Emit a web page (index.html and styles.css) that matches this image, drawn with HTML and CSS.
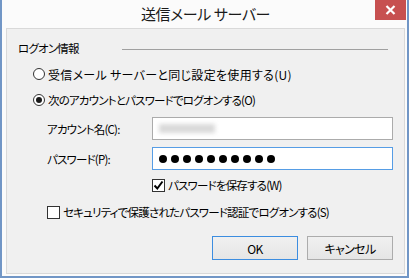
FILE: index.html
```html
<!DOCTYPE html>
<html lang="ja">
<head>
    <meta charset="UTF-8">
    <title>送信メール サーバー</title>
    <link rel="stylesheet" href="styles.css">
</head>
<body>
    <div class="window">
        <div class="titlebar">
            <span></span>
            <h1 class="title">送信メール サーバー</h1>
            <button class="close" aria-label="閉じる">
                <svg width="11" height="10" viewBox="0 0 11 10">
                    <path d="M1.5 1 L9.5 9 M9.5 1 L1.5 9" stroke="#fff" stroke-width="2.2" fill="none"/>
                </svg>
            </button>
        </div>
        <div class="content">
            <div class="group-head">
                <span>ログオン情報</span>
                <span class="rule"></span>
            </div>

            <div class="row radio-row">
                <span class="radio"></span>
                <span class="wide">受信メール サーバーと同じ設定を使用する(U)</span>
            </div>
            <div class="row radio-row">
                <span class="radio checked"></span>
                <span>次のアカウントとパスワードでログオンする(O)</span>
            </div>

            <div class="field">
                <label>アカウント名(C):</label>
                <div class="input"><span class="blurred"></span></div>
            </div>
            <div class="field">
                <label>パスワード(P):</label>
                <div class="input focused">
                    <span class="dot"></span><span class="dot"></span><span class="dot"></span><span class="dot"></span><span class="dot"></span>
                    <span class="dot"></span><span class="dot"></span><span class="dot"></span><span class="dot"></span><span class="dot"></span>
                </div>
            </div>

            <div class="row check-row save">
                <span class="check checked">
                    <svg width="11" height="11" viewBox="0 0 11 11">
                        <path d="M1.5 5.5 L4.3 8.5 L9.5 1.5" stroke="#000" stroke-width="2" fill="none"/>
                    </svg>
                </span>
                <span>パスワードを保存する(W)</span>
            </div>
            <div class="row check-row spa">
                <span class="check"></span>
                <span>セキュリティで保護されたパスワード認証でログオンする(S)</span>
            </div>

            <div class="buttons">
                <button class="btn default">OK</button>
                <button class="btn">キャンセル</button>
            </div>
        </div>
    </div>
</body>
</html>
```

FILE: styles.css
```css
* {
    box-sizing: border-box;
}

body {
    margin: 0;
    font-family: "Noto Sans CJK JP", "Noto Sans", sans-serif;
    font-size: 11.5px;
    font-feature-settings: "palt";
    letter-spacing: -0.8px;
    color: #000;
}

.window {
    width: 409px;
    height: 278px;
    background: #fbfbfb;
    border: 2px solid #7196c6;
    border-top: 0;
    padding: 0 2px 2px 4px;
    display: flex;
    flex-direction: column;
}

.titlebar {
    height: 28px;
    display: grid;
    grid-template-columns: 1fr auto 1fr;
    align-items: center;
}

.title {
    margin: 0;
    font-size: 15px;
    font-weight: normal;
    color: #1a1a1a;
    letter-spacing: -0.4px;
    padding-bottom: 1px;
}

.close {
    justify-self: end;
    align-self: start;
    width: 31px;
    height: 20px;
    margin-right: -1px;
    border: 0;
    padding: 0;
    background: #c75050;
    display: flex;
    align-items: center;
    justify-content: center;
}

.content {
    flex: 1;
    background: #f0f0f0;
    border: 1px solid #d9d9d9;
    padding: 9px 0 0 0;
}

.group-head {
    height: 20px;
    display: flex;
    align-items: center;
    padding: 0 16px 0 11px;
}

.rule {
    width: 266px;
    margin-left: auto;
    margin-top: 3px;
    border-top: 1px solid #a0a0a0;
}

.row {
    height: 20px;
    display: flex;
    align-items: center;
}

.radio-row {
    margin-top: 6px;
    padding-left: 26px;
}

.wide {
    font-size: 12px;
    letter-spacing: 0.3px;
}

.radio {
    width: 12px;
    height: 12px;
    border: 1px solid #333;
    border-radius: 50%;
    background: #fff;
    margin-right: 3px;
    display: flex;
    align-items: center;
    justify-content: center;
}

.radio.checked::after {
    content: "";
    width: 6px;
    height: 6px;
    border-radius: 50%;
    background: #1a1a1a;
}

.field {
    height: 23px;
    margin-top: 7px;
    display: flex;
    align-items: center;
    padding-left: 40px;
}

.field label {
    width: 105px;
}

.input {
    width: 241px;
    height: 23px;
    background: #fff;
    border: 1px solid #ababab;
    display: flex;
    align-items: center;
    gap: 4px;
    padding-left: 6px;
}

.input.focused {
    border-color: #569de5;
}

.blurred {
    width: 56px;
    height: 9px;
    background: #d9d9d9;
    filter: blur(2px);
}

.dot {
    width: 8px;
    height: 8px;
    border-radius: 50%;
    background: #000;
}

.check-row {
    margin-top: 7px;
}

.check-row.save {
    margin-top: 5px;
    padding-left: 145px;
}

.check-row.spa {
    padding-left: 40px;
}

.check {
    width: 13px;
    height: 13px;
    border: 1px solid #333;
    background: #fff;
    margin-right: 3px;
    display: flex;
    align-items: center;
    justify-content: center;
}

.buttons {
    margin-top: 14px;
    display: flex;
    justify-content: flex-end;
    gap: 9px;
    padding-right: 11px;
}

.btn {
    width: 86px;
    height: 24px;
    font-family: inherit;
    font-size: 12px;
    font-feature-settings: "palt";
    letter-spacing: -0.6px;
    color: #000;
    border: 1px solid #acacac;
    background: linear-gradient(#f0f0f0, #e5e5e5);
    padding: 0;
}

.btn.default {
    border-color: #3c8de0;
}
```
